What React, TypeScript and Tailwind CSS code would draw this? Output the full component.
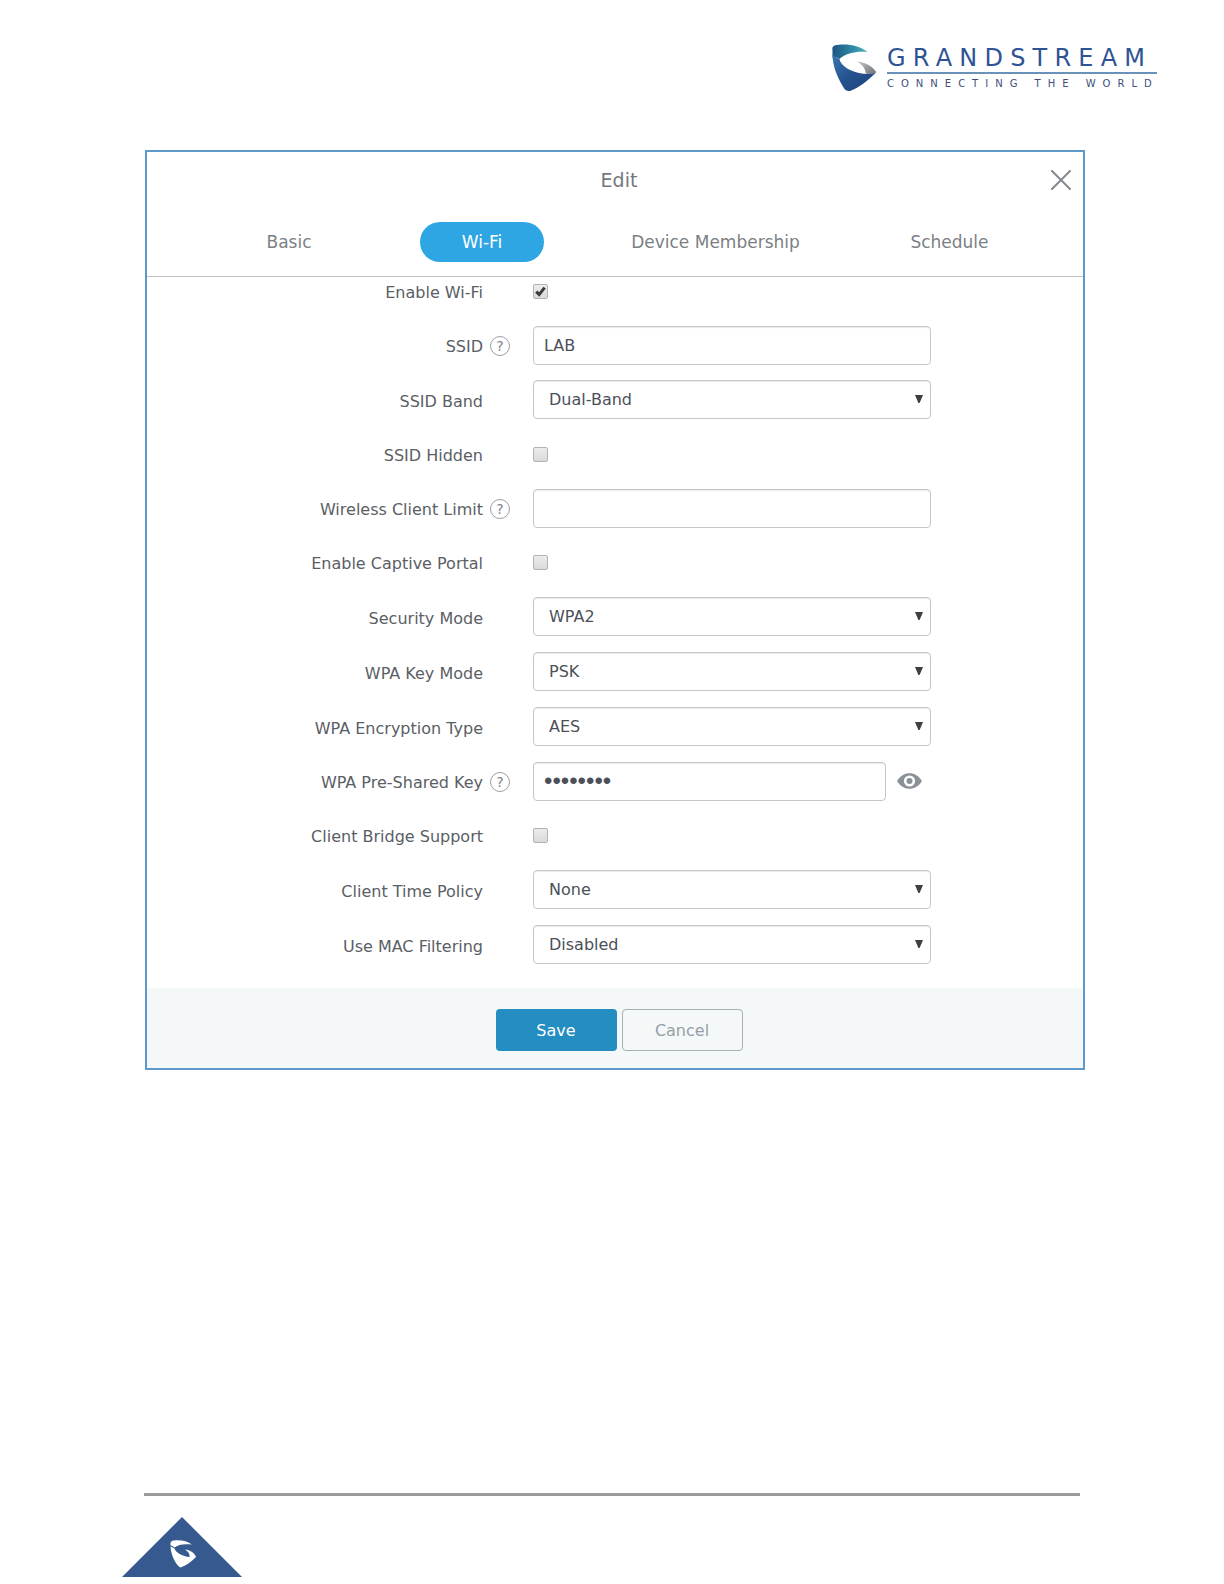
import { ReactNode, useState } from "react";

const tabs = ["Basic", "Wi-Fi", "Device Membership", "Schedule"];

const fieldClass =
  "h-[39px] w-full rounded border border-[#c3c7ca] bg-white text-[#4b5058] shadow-[inset_0_1px_1px_rgba(0,0,0,0.08)] outline-none focus:border-[#2ea6e4]";

function BrandMark() {
  return (
    <svg viewBox="36 43 134 143" className="h-12 w-[45px] shrink-0" aria-hidden="true">
      <defs>
        <linearGradient id="mark-top" x1="0" y1="0" x2="1" y2="0">
          <stop offset="0" stopColor="#1d5483" />
          <stop offset="0.6" stopColor="#2f8ba6" />
          <stop offset="1" stopColor="#55b9c3" />
        </linearGradient>
        <linearGradient id="mark-body" x1="0" y1="0" x2="1" y2="1">
          <stop offset="0" stopColor="#3a78ae" />
          <stop offset="0.5" stopColor="#24528f" />
          <stop offset="1" stopColor="#1d427c" />
        </linearGradient>
        <linearGradient id="mark-tip" x1="0" y1="0" x2="1" y2="1">
          <stop offset="0" stopColor="#c4c6c8" />
          <stop offset="1" stopColor="#6d7074" />
        </linearGradient>
      </defs>
      <path d="M37 54C39 48 46 45 56 45C90 42 122 50 142 67C108 64 78 70 58 88C50 82 42 80 38 84Z" fill="url(#mark-top)" />
      <path d="M37 72C44 80 50 84 58 88C62 108 92 128 130 132C144 133 158 131 168 127C142 152 118 172 90 183C80 185 73 178 69 170C50 138 38 108 37 72Z" fill="url(#mark-body)" />
      <path d="M111 95C136 98 158 110 168 127C158 132 147 133 137 132C136 117 127 105 111 95Z" fill="url(#mark-tip)" />
    </svg>
  );
}

function HelpIcon({ topic }: { topic: string }) {
  return (
    <button
      type="button"
      aria-label={`Help: ${topic}`}
      className="flex size-5 items-center justify-center rounded-full border border-[#9a9fa5] text-sm leading-none text-[#7f848b]"
    >
      ?
    </button>
  );
}

type RowProps = {
  id: string;
  label: string;
  help?: boolean;
  tall?: boolean;
  children: ReactNode;
};

function Row({ id, label, help, tall, children }: RowProps) {
  return (
    <div
      className={`grid grid-cols-[336fr_50px_398fr_152fr] items-center ${tall ? "h-[55px]" : "h-[54px]"}`}
    >
      <label htmlFor={id} className="pt-1 text-right text-base text-[#5a5e65]">
        {label}
      </label>
      <div className="pt-0.5 pl-[7px]">{help && <HelpIcon topic={label} />}</div>
      <div>{children}</div>
    </div>
  );
}

function CheckRow({ id, label, checked = false }: { id: string; label: string; checked?: boolean }) {
  const [on, setOn] = useState(checked);

  return (
    <Row id={id} label={label}>
      <div className="relative size-[15px]">
        <input
          id={id}
          type="checkbox"
          checked={on}
          onChange={(e) => setOn(e.target.checked)}
          className="block size-[15px] appearance-none rounded-xs border border-[#b0b2b4] bg-linear-to-b from-[#ececec] to-[#dadada]"
        />
        {on && (
          <svg viewBox="0 0 15 15" className="pointer-events-none absolute inset-0" aria-hidden="true">
            <path d="M3.2 7.6L6.2 10.6L11.6 3.6" fill="none" stroke="#3b3b3b" strokeWidth="3" />
          </svg>
        )}
      </div>
    </Row>
  );
}

function TextRow({ id, label, value = "" }: { id: string; label: string; value?: string }) {
  return (
    <Row id={id} label={label} help>
      <input id={id} type="text" defaultValue={value} className={`block px-2.5 text-base ${fieldClass}`} />
    </Row>
  );
}

function SelectRow({ id, label, options }: { id: string; label: string; options: string[] }) {
  return (
    <Row id={id} label={label} tall>
      <div className="relative">
        <select id={id} className={`block appearance-none pr-8 pl-[15px] text-base ${fieldClass}`}>
          {options.map((option) => (
            <option key={option}>{option}</option>
          ))}
        </select>
        <svg
          viewBox="0 0 8 8"
          className="pointer-events-none absolute top-[15px] right-2 size-2"
          aria-hidden="true"
        >
          <path d="M0 0H8L4.6 8H3.4Z" fill="#3f3f3f" />
        </svg>
      </div>
    </Row>
  );
}

function PasswordRow({ id, label }: { id: string; label: string }) {
  const [visible, setVisible] = useState(false);

  return (
    <Row id={id} label={label} help>
      <div className="flex items-center gap-[11px] pr-[9px]">
        <input
          id={id}
          type={visible ? "text" : "password"}
          defaultValue="password"
          className={`block min-w-0 px-2.5 ${
            visible ? "text-base" : "font-['Liberation_Sans',Arial,sans-serif] text-2xl"
          } ${fieldClass}`}
        />
        <button type="button" aria-label="Show key" onClick={() => setVisible(!visible)} className="shrink-0">
          <svg viewBox="0 0 25 16" className="h-4 w-[25px]" aria-hidden="true">
            <path
              fillRule="evenodd"
              fill="#8b9199"
              d="M0 8C6 -2.4 19 -2.4 25 8C19 18.4 6 18.4 0 8ZM12.5 2.4A5.6 5.6 0 1 0 12.5 13.6A5.6 5.6 0 1 0 12.5 2.4Z"
            />
            <circle cx="12.5" cy="8" r="3" fill="#8b9199" />
          </svg>
        </button>
      </div>
    </Row>
  );
}

export default function App() {
  const [active, setActive] = useState("Wi-Fi");

  return (
    <div className="flex min-h-screen flex-col bg-white font-['DejaVu_Sans',Verdana,sans-serif]">
      <header className="flex items-start justify-end pt-11 pr-[67px]">
        <BrandMark />
        <div className="ml-[10px] w-[270px] whitespace-nowrap text-[#2f5496]">
          <p className="text-2xl leading-7 tracking-[0.3em]">GRANDSTREAM</p>
          <div className="h-0.5 bg-[#6a92b8]" />
          <p className="pt-0.5 text-[10px] leading-4 tracking-[0.7em] text-[#3d4f7c]">CONNECTING THE WORLD</p>
        </div>
      </header>

      <main className="mt-[58px] mr-[139px] ml-[145px] border-2 border-[#5f98cb]">
        <div className="grid grid-cols-[1fr_auto_1fr] items-center px-3 pt-3.5">
          <h1 className="col-start-2 pl-2 text-[19px] leading-7 text-[#74787e]">Edit</h1>
          <button type="button" aria-label="Close" className="justify-self-end">
            <svg viewBox="0 0 20 20" className="size-5" aria-hidden="true">
              <path d="M1 1L19 19M19 1L1 19" stroke="#84888e" strokeWidth="2" strokeLinecap="round" />
            </svg>
          </button>
        </div>

        <nav
          role="tablist"
          className="grid grid-cols-[192fr_194fr_273fr_195fr] justify-items-center border-b border-[#c0c3c6] pt-7 pr-9 pb-3.5 pl-[46px]"
        >
          {tabs.map((tab) => (
            <button
              key={tab}
              type="button"
              role="tab"
              aria-selected={tab === active}
              onClick={() => setActive(tab)}
              className={`h-10 rounded-full px-[42px] pt-0.5 text-[17px] whitespace-nowrap ${
                tab === active ? "bg-[#2ea6e4] text-white" : "text-[#7b7f85]"
              }`}
            >
              {tab}
            </button>
          ))}
        </nav>

        <form onSubmit={(e) => e.preventDefault()}>
          <div className="-mt-[13px] pb-4">
            <CheckRow id="enable-wifi" label="Enable Wi-Fi" checked />
            <TextRow id="ssid" label="SSID" value="LAB" />
            <SelectRow id="ssid-band" label="SSID Band" options={["Dual-Band", "2.4GHz", "5GHz"]} />
            <CheckRow id="ssid-hidden" label="SSID Hidden" />
            <TextRow id="client-limit" label="Wireless Client Limit" />
            <CheckRow id="captive-portal" label="Enable Captive Portal" />
            <SelectRow id="security-mode" label="Security Mode" options={["WPA2", "WPA/WPA2", "Open"]} />
            <SelectRow id="wpa-key-mode" label="WPA Key Mode" options={["PSK", "802.1x"]} />
            <SelectRow id="wpa-encryption" label="WPA Encryption Type" options={["AES", "AES/TKIP"]} />
            <PasswordRow id="wpa-key" label="WPA Pre-Shared Key" />
            <CheckRow id="client-bridge" label="Client Bridge Support" />
            <SelectRow id="time-policy" label="Client Time Policy" options={["None"]} />
            <SelectRow id="mac-filtering" label="Use MAC Filtering" options={["Disabled", "Whitelist", "Blacklist"]} />
          </div>

          <div className="flex justify-center gap-[5px] bg-[#f4f8f9] pt-[21px] pb-[17px] pl-2">
            <button type="submit" className="h-[42px] w-[121px] rounded bg-[#248dc1] pt-0.5 text-base text-white">
              Save
            </button>
            <button
              type="button"
              className="h-[42px] w-[121px] rounded border border-[#a9aeb4] pt-0.5 text-base text-[#989ea6]"
            >
              Cancel
            </button>
          </div>
        </form>
      </main>

      <footer className="mt-auto pb-[7px]">
        <div className="mr-36 ml-36 h-[3px] bg-[#9b9b9b]" />
        <svg viewBox="0 0 120 60" className="mt-[21px] ml-[122px] h-[60px] w-[120px]" aria-hidden="true">
          <path d="M60 0L120 60H0Z" fill="#36598f" />
          <path d="M48.500 26C49 24 51 23.300 54 23.300C60 23 66 24.500 70 27.500C62 26.500 56 27.500 52.500 30.500C50.500 29 49.500 28.500 48.500 28.500Z" fill="#fff" />
          <path d="M48.500 29.300L52.500 31.500C54 36 61 39.500 67.500 40C68 37.500 66.500 34.500 63 32.500C69 33 73 36.500 74 40C69 45 64 48.500 58.500 50.500C55.500 49.500 49 40 48.500 29.300Z" fill="#fff" />
        </svg>
      </footer>
    </div>
  );
}
